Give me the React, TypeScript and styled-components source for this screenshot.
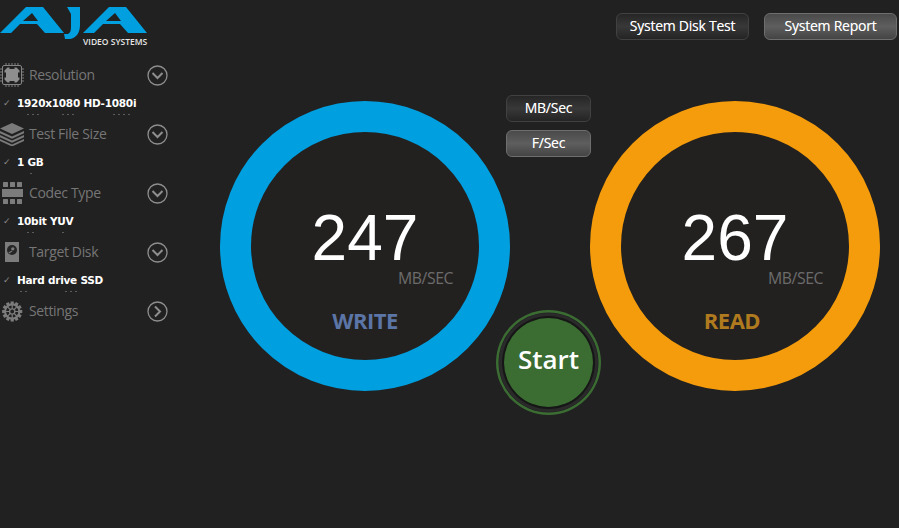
import React from 'react';
import styled, { createGlobalStyle } from 'styled-components';

const Global = createGlobalStyle`
  html, body { margin: 0; padding: 0; background: #212121; }
  body { font-family: "Open Sans", "Noto Sans", sans-serif; overflow: hidden; }
`;

const Page = styled.div`
  width: 899px;
  height: 528px;
  display: flex;
  background: #212121;
  overflow: hidden;
`;

const Sidebar = styled.aside`
  width: 220px;
  flex: none;
  display: flex;
  flex-direction: column;
`;

const LogoBlock = styled.div`
  height: 60px;
  position: relative;
  svg { display: block; }
`;

const LogoCaption = styled.div`
  position: absolute;
  left: 83px;
  top: 37px;
  font: 600 8.5px/10px "Open Sans", sans-serif;
  color: #e6e6e6;
  white-space: nowrap;
`;

const Section = styled.section`
  width: 168px;
  height: 59px;
  display: flex;
  flex-direction: column;
`;

const SectionHead = styled.div`
  height: 30px;
  flex: none;
  display: flex;
  align-items: center;
  svg { flex: none; display: block; }
`;

const IconSlot = styled.div`
  width: 29px;
  flex: none;
`;

const SectionLabel = styled.span`
  flex: 1;
  font: 400 14px/30px "Open Sans", sans-serif;
  letter-spacing: -0.35px;
  color: #767676;
`;

const ValueRow = styled.div`
  height: 26px;
  flex: none;
  display: flex;
  align-items: center;
`;

const Check = styled.span`
  width: 17px;
  padding-left: 3px;
  box-sizing: border-box;
  flex: none;
  font: 400 9px/26px "DejaVu Sans", sans-serif;
  color: #8a8a8a;
`;

const ValueText = styled.span`
  font: 700 10.5px/26px "DejaVu Sans", sans-serif;
  color: #fff;
  letter-spacing: -0.25px;
  white-space: nowrap;
`;

const GhostRow = styled.div`
  height: 1px;
  flex: none;
  margin-top: -2px;
  display: flex;
`;

const GhostDash = styled.span<{ $gap: number; $w: number }>`
  margin-left: ${p => p.$gap}px;
  width: ${p => p.$w}px;
  background: repeating-linear-gradient(90deg, #5c5c5c 0 2px, transparent 2px 5px);
`;

const Main = styled.main`
  flex: 1;
  display: flex;
  flex-direction: column;
`;

const TopBar = styled.div`
  height: 101px;
  flex: none;
  box-sizing: border-box;
  padding: 13px 2px 0 0;
  display: flex;
  justify-content: flex-end;
  align-items: flex-start;
  gap: 15px;
`;

const PillButton = styled.button<{ $active?: boolean; $w: number }>`
  width: ${p => p.$w}px;
  height: 27px;
  box-sizing: border-box;
  padding: 0 0 2px;
  border-radius: 6px;
  border: 1px solid ${p => (p.$active ? '#6e6e6e' : '#414141')};
  background: ${p =>
    p.$active
      ? 'linear-gradient(#4a4a4a, #5e5e5e 50%, #444)'
      : 'linear-gradient(#262626, #383838 50%, #242424)'};
  color: #fff;
  font: 400 14px/23px "Open Sans", sans-serif;
  letter-spacing: -0.25px;
  text-align: center;
  text-shadow: 0 0 0.5px rgba(255, 255, 255, 0.6);
`;

const GaugeRow = styled.div`
  display: flex;
  align-items: flex-start;
`;

const Gauge = styled.div<{ $color: string }>`
  width: 290px;
  height: 290px;
  box-sizing: border-box;
  flex: none;
  border-radius: 50%;
  border: 31px solid ${p => p.$color};
  background: #232120;
  display: flex;
  flex-direction: column;
  align-items: center;
  padding-top: 75px;
`;

const Reading = styled.div`
  font: 400 64px/62px "Liberation Sans", sans-serif;
  color: #fff;
`;

const Unit = styled.div`
  align-self: flex-end;
  margin-right: 26px;
  font: 400 15.8px/18px "Open Sans", sans-serif;
  letter-spacing: -0.45px;
  color: #6c6c6c;
`;

const GaugeName = styled.div<{ $color: string; $shift?: number }>`
  margin-top: 21px;
  margin-right: ${p => p.$shift ?? 0}px;
  font: 700 22px/24px "Open Sans", sans-serif;
  letter-spacing: -0.5px;
  color: ${p => p.$color};
`;

const Middle = styled.div`
  width: 80px;
  flex: none;
  box-sizing: border-box;
  padding-right: 3px;
  margin-top: -6px;
  display: flex;
  flex-direction: column;
  align-items: center;
`;

const UnitToggle = styled(PillButton)`
  flex: none;
  margin-bottom: 8px;
`;

const StartButton = styled.button`
  flex: none;
  width: 89px;
  height: 89px;
  margin-top: 153px;
  padding: 0 0 6px;
  border: none;
  border-radius: 50%;
  background: #3b6d33;
  box-shadow: 0 0 0 2px #161616, 0 0 0 5px #2a2a2b, 0 0 0 5.5px #212121, 0 0 0 8px #3b6d33;
  color: #fff;
  font: 600 26px/83px "Open Sans", sans-serif;
`;

const ChipIcon = () => (
  <svg width="24" height="24" viewBox="0 0 24 24">
    <path
      d="M6 0v24M9 0v24M12 0v24M15 0v24M18 0v24M0 6h24M0 9h24M0 12h24M0 15h24M0 18h24"
      stroke="#7e7e7e"
      strokeWidth="1"
      fill="none"
    />
    <rect x="2.5" y="2.5" width="19" height="19" rx="1.5" fill="#212121" stroke="#848484" />
    <path d="M7.5 4.5h2v1.5h5V4.5h2l3 3v2H18v5h1.5v2l-3 3h-2V18h-5v1.5h-2l-3-3v-2H6v-5H4.5v-2z" fill="#8e8e8e" />
  </svg>
);

const StackIcon = () => (
  <svg width="24" height="24" viewBox="0 0 24 24" fill="#7a7a7a">
    <path d="M0 6.5 12 1l12 5.5L12 12z" />
    <path d="M0 9 12 14.5 24 9v2.2L12 16.7 0 11.2z" />
    <path d="M0 13 12 18.5 24 13v2.2L12 20.7 0 15.2z" />
    <path d="M0 17 12 22.5 24 17v2L12 24.5 0 19z" />
  </svg>
);

const CodecIcon = () => (
  <svg width="24" height="22" viewBox="0 0 24 22" fill="#7c7c7c">
    <rect x="3" y="0" width="5" height="5" rx="0.5" />
    <rect x="10" y="0" width="5" height="5" rx="0.5" />
    <rect x="17" y="0" width="5" height="5" rx="0.5" />
    <rect x="2" y="7" width="21" height="8" />
    <rect x="3" y="17" width="5" height="5" rx="0.5" />
    <rect x="10" y="17" width="5" height="5" rx="0.5" />
    <rect x="17" y="17" width="5" height="5" rx="0.5" />
  </svg>
);

const DiskIcon = () => (
  <svg width="24" height="20" viewBox="0 0 24 20">
    <rect x="5" y="0" width="14" height="20" fill="#7c7c7c" />
    <circle cx="12" cy="8" r="5" fill="#262626" />
    <circle cx="12.8" cy="6.8" r="1.6" fill="#7c7c7c" />
    <path d="M8.8 11 12 9" stroke="#7c7c7c" strokeWidth="1.2" />
  </svg>
);

const GearIcon = () => {
  const teeth = Array.from({ length: 12 }, (_, i) => i * 30);
  return (
    <svg width="24" height="21" viewBox="-1.7 0 24 21">
      <g transform="scale(0.875)">
        {teeth.map(a => (
          <rect key={a} x="10.2" y="0.5" width="3.6" height="4.5" fill="#7c7c7c" transform={`rotate(${a} 12 12)`} />
        ))}
        <circle cx="12" cy="12" r="8.2" fill="none" stroke="#7c7c7c" strokeWidth="2.2" />
        <circle cx="12" cy="12" r="3" fill="none" stroke="#7c7c7c" strokeWidth="1.6" />
        <path
          d="M12 4v5M12 15v5M4 12h5M15 12h5M6.3 6.3l3.6 3.6M14.1 14.1l3.6 3.6M17.7 6.3l-3.6 3.6M9.9 14.1l-3.6 3.6"
          stroke="#7c7c7c"
          strokeWidth="1.4"
        />
      </g>
    </svg>
  );
};

const RoundChevron = ({ right }: { right?: boolean }) => (
  <svg width="21" height="21" viewBox="0 0 21 21" fill="none" stroke="#8e8e8e">
    <circle cx="10.5" cy="10.5" r="9.5" strokeWidth="1.3" />
    <path d={right ? 'M8 5.5l5 5-5 5' : 'M5.5 8l5 5 5-5'} strokeWidth="2" />
  </svg>
);

const AjaLogo = () => (
  <svg width="147" height="42" viewBox="0 0 147 42" fill="#009fe0">
    <path fillRule="evenodd" d="M0 33 26 7h17l21 26H45l-8-9H20l-9 9zM23 21 32 13l6 8z" />
    <path d="M67 7h13v18c0 8-4 13-10 14h-5l-1-5h4c2-1 3-3 3-7V14z" />
    <path fillRule="evenodd" d="M83 33l26-26h17l21 26h-19l-8-9h-17l-9 9zm23-12 9-8 6 8z" />
  </svg>
);

const sections = [
  { name: 'Resolution', value: '1920x1080 HD-1080i', icon: <ChipIcon />, ghost: [[27, 15], [20, 15], [36, 17]] },
  { name: 'Test File Size', value: '1 GB', icon: <StackIcon />, ghost: [[30, 5]] },
  { name: 'Codec Type', value: '10bit YUV', icon: <CodecIcon />, ghost: [[27, 8], [27, 3]] },
  { name: 'Target Disk', value: 'Hard drive SSD', icon: <DiskIcon />, ghost: [[20, 7], [38, 12]] },
];

export default function App() {
  return (
    <Page>
      <Global />
      <Sidebar>
        <LogoBlock>
          <AjaLogo />
          <LogoCaption>VIDEO SYSTEMS</LogoCaption>
        </LogoBlock>
        {sections.map(s => (
          <Section key={s.name}>
            <SectionHead>
              <IconSlot>{s.icon}</IconSlot>
              <SectionLabel>{s.name}</SectionLabel>
              <RoundChevron />
            </SectionHead>
            <ValueRow>
              <Check>✓</Check>
              <ValueText>{s.value}</ValueText>
            </ValueRow>
            <GhostRow>
              {s.ghost.map(([gap, w]) => (
                <GhostDash key={gap} $gap={gap} $w={w} />
              ))}
            </GhostRow>
          </Section>
        ))}
        <Section>
          <SectionHead>
            <IconSlot><GearIcon /></IconSlot>
            <SectionLabel>Settings</SectionLabel>
            <RoundChevron right />
          </SectionHead>
        </Section>
      </Sidebar>
      <Main>
        <TopBar>
          <PillButton $w={133}>System Disk Test</PillButton>
          <PillButton $w={133} $active>System Report</PillButton>
        </TopBar>
        <GaugeRow>
          <Gauge $color="#009fe0">
            <Reading>247</Reading>
            <Unit>MB/SEC</Unit>
            <GaugeName $color="#5b75a6">WRITE</GaugeName>
          </Gauge>
          <Middle>
            <UnitToggle $w={85}>MB/Sec</UnitToggle>
            <UnitToggle $w={85} $active>F/Sec</UnitToggle>
            <StartButton>Start</StartButton>
          </Middle>
          <Gauge $color="#f59c0c">
            <Reading>267</Reading>
            <Unit>MB/SEC</Unit>
            <GaugeName $color="#b07a1e" $shift={6}>READ</GaugeName>
          </Gauge>
        </GaugeRow>
      </Main>
    </Page>
  );
}
